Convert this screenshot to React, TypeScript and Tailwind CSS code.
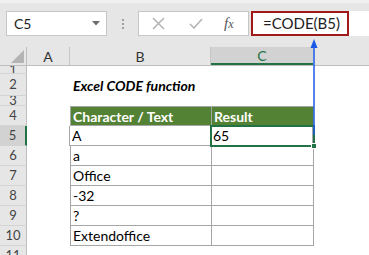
import React from "react";

const font = { fontFamily: "Lato, 'Liberation Sans', sans-serif" };

type Row = { n: string; h: string; b?: string; c?: string; kind?: "title" | "head" | "data" | "none" };

const rows: Row[] = [
  { n: "1", h: "h-[8px]", kind: "none" },
  { n: "2", h: "h-[22px]", kind: "title", b: "Excel CODE function" },
  { n: "3", h: "h-[10px]", kind: "none" },
  { n: "4", h: "h-[20px]", kind: "head", b: "Character / Text", c: "Result" },
  { n: "5", h: "h-[20px]", kind: "data", b: "A", c: "65" },
  { n: "6", h: "h-[20px]", kind: "data", b: "a" },
  { n: "7", h: "h-[20px]", kind: "data", b: "Office" },
  { n: "8", h: "h-[20px]", kind: "data", b: "-32" },
  { n: "9", h: "h-[20px]", kind: "data", b: "?" },
  { n: "10", h: "h-[20px]", kind: "data", b: "Extendoffice" },
  { n: "11", h: "h-[20px]", kind: "none" },
];

function RowHeader({ r, sel }: { r: Row; sel: boolean }) {
  return (
    <div
      className={`w-[27px] shrink-0 flex items-center justify-center overflow-hidden border-b border-[#d4d4d4] text-[13px] leading-none text-[#444] ${
        sel ? "bg-[#d2d2d2] border-r-2 border-r-[#217346]" : "bg-[#e6e6e6] border-r border-r-[#bdbdbd]"
      }`}
    >
      {r.n}
    </div>
  );
}

export default function App() {
  return (
    <div className="w-[369px] h-[255px] overflow-hidden bg-white relative" style={font}>
      <div className="bg-[#e6e6e6] h-[47px] flex flex-col border-t-[3px] border-t-[#f0f0f0]">
        <div className="flex items-center mt-[8px] h-[25px]">
          <div className="ml-[6px] w-[101px] h-[25px] bg-white border border-[#c6c6c6] flex items-center justify-between pl-[7px] pr-[6px]">
            <span className="text-[14px] text-[#222]">C5</span>
            <svg width="8" height="5" viewBox="0 0 8 5">
              <path d="M0 0 L8 0 L4 4.5 Z" fill="#6d6d6d" />
            </svg>
          </div>
          <div className="w-[31px] flex flex-col items-center gap-[2px]">
            <span className="w-[2px] h-[2px] bg-[#a0a0a0]" />
            <span className="w-[2px] h-[2px] bg-[#a0a0a0]" />
            <span className="w-[2px] h-[2px] bg-[#a0a0a0]" />
          </div>
          <div className="w-[111px] h-[25px] bg-white border border-[#c6c6c6] flex items-center">
            <svg className="ml-[13px]" width="13" height="13" viewBox="0 0 13 13">
              <path d="M1 1 L12 12 M12 1 L1 12" stroke="#b5b5b5" strokeWidth="1.6" />
            </svg>
            <svg className="ml-[24px]" width="14" height="11" viewBox="0 0 14 11">
              <path d="M1 6 L5 10 L13 1" stroke="#b5b5b5" strokeWidth="1.6" fill="none" />
            </svg>
            <span
              className="ml-[21px] text-[15px] italic text-[#555]"
              style={{ fontFamily: "'Liberation Serif', serif" }}
            >
              f<span className="text-[12px]">x</span>
            </span>
          </div>
          <div className="ml-[2px] flex-1 h-[25px] bg-white flex items-center">
            <div className="w-[98px] h-[25px] border-[2px] border-[#a11a1a] flex items-center pl-[10px] text-[15px] text-[#222]">
              =CODE(B5)
            </div>
          </div>
        </div>
      </div>
      <div className="flex h-[19px] bg-[#e6e6e6] border-b border-[#bdbdbd]">
        <div className="w-[27px] shrink-0 border-r border-[#bdbdbd] relative">
          <svg className="absolute left-[11px] top-[3px]" width="13" height="13" viewBox="0 0 13 13">
            <path d="M13 0 L13 13 L0 13 Z" fill="#b4b4b4" />
          </svg>
        </div>
        <div className="w-[43px] shrink-0 border-r border-[#c6c6c6] flex items-center justify-center text-[14px] text-[#333]">
          A
        </div>
        <div className="w-[141px] shrink-0 border-r border-[#c6c6c6] flex items-center justify-center text-[14px] text-[#333]">
          B
        </div>
        <div className="w-[102px] shrink-0 bg-[#d2d2d2] border-b-2 border-[#217346] flex items-center justify-center text-[14px] text-[#217346]">
          C
        </div>
        <div className="flex-1" />
      </div>
      <div className="flex flex-col">
        {rows.map((r) => {
          const sel = r.n === "5";
          return (
            <div key={r.n} className={`flex ${r.h}`}>
              <RowHeader r={r} sel={sel} />
              <div className={`${sel ? "w-[42px]" : "w-[43px]"} shrink-0`} />
              {r.kind === "title" && (
                <div className="flex-1 flex items-center pl-[3px] text-[14px] font-bold italic text-black whitespace-nowrap">
                  {r.b}
                </div>
              )}
              {(r.kind === "head" || r.kind === "data") && (
                <>
                  <div
                    className={`w-[141px] shrink-0 flex items-center pl-[2px] text-[14px] whitespace-nowrap border-l border-b border-[#a6a6a6] ${
                      r.kind === "head" ? "bg-[#548235] text-white font-bold border-t" : "text-black"
                    }`}
                  >
                    {r.b}
                  </div>
                  <div
                    className={`w-[103px] shrink-0 flex items-center pl-[2px] text-[14px] whitespace-nowrap border-x border-b border-[#a6a6a6] ${
                      r.kind === "head" ? "bg-[#548235] text-white font-bold border-t" : "text-black"
                    }`}
                  >
                    {r.c}
                  </div>
                </>
              )}
            </div>
          );
        })}
      </div>
      <div className="absolute left-[210px] top-[125px] w-[105px] h-[22px] border-2 border-[#217346]" />
      <div className="absolute left-[311px] top-[143px] w-[6px] h-[6px] bg-[#217346] border border-white" />
      <svg className="absolute left-[308px] top-[38px]" width="12" height="100" viewBox="0 0 12 100">
        <path d="M6 8 L6 97" stroke="#1c5ae6" strokeWidth="1.5" />
        <path d="M6 1 L9.5 10 L2.5 10 Z" fill="#1c5ae6" />
      </svg>
    </div>
  );
}
